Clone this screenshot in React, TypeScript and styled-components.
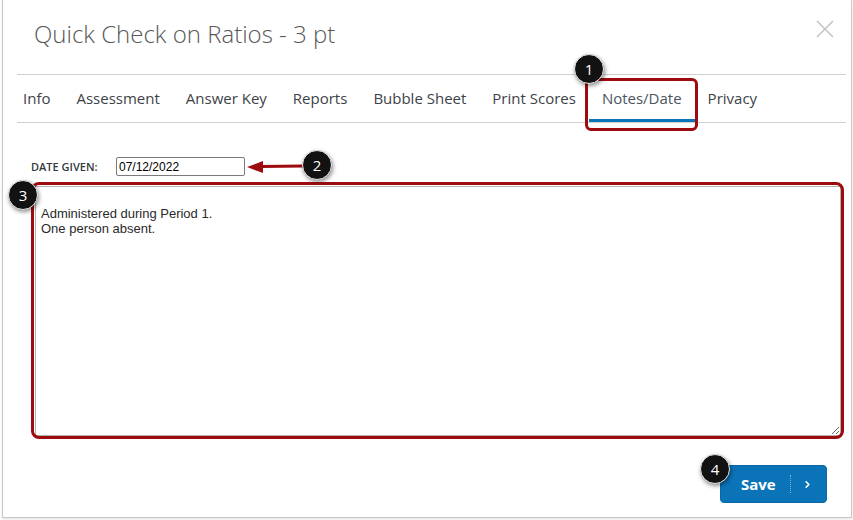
import styled, { createGlobalStyle } from "styled-components";
import { ChevronRight } from "lucide-react";

const GlobalStyle = createGlobalStyle`
  html, body {
    margin: 0;
    padding: 0;
    background: #ffffff;
  }
  * {
    box-sizing: border-box;
  }
`;

const tabs = [
  "Info",
  "Assessment",
  "Answer Key",
  "Reports",
  "Bubble Sheet",
  "Print Scores",
  "Notes/Date",
  "Privacy",
];

function App() {
  return (
    <Page>
      <GlobalStyle />
      <Dialog>
        <Header>
          <Title>Quick Check on Ratios - 3 pt</Title>
          <Close aria-label="close">
            <svg width="18" height="18" viewBox="0 0 18 18">
              <path d="M1 1 L17 17 M17 1 L1 17" stroke="#c4c4c4" strokeWidth="1.6" fill="none" />
            </svg>
          </Close>
        </Header>
        <TabBar>
          {tabs.map((t) => (
            <Tab key={t} $active={t === "Notes/Date"}>
              {t}
            </Tab>
          ))}
        </TabBar>
        <Body>
          <DateRow>
            <Label>Date Given:</Label>
            <DateInput defaultValue="07/12/2022" />
          </DateRow>
          <Notes
            defaultValue={"Administered during Period 1.\nOne person absent."}
          />
        </Body>
        <Footer>
          <SaveButton type="button">
            <SaveText>Save</SaveText>
            <Split />
            <Chevron>
              <ChevronRight size={11} strokeWidth={3.5} />
            </Chevron>
          </SaveButton>
        </Footer>
      </Dialog>

      <Outline $x={585} $y={78} $w={113} $h={53} $r={6} />
      <Outline $x={31} $y={182} $w={813} $h={257} $r={8} />
      <Arrow width="60" height="20" viewBox="0 0 60 20">
        <line x1="14" y1="8.5" x2="56" y2="8" stroke="#9e0b0f" strokeWidth="3" />
        <polygon points="0,9 16,3 16,15" fill="#9e0b0f" />
      </Arrow>
      <Badge $x={589} $y={69}>1</Badge>
      <Badge $x={317} $y={165}>2</Badge>
      <Badge $x={23} $y={195}>3</Badge>
      <Badge $x={715} $y={469}>4</Badge>
    </Page>
  );
}

const Page = styled.div`
  position: relative;
  width: 853px;
  height: 520px;
  padding-left: 2px;
  overflow: hidden;
`;

const Dialog = styled.div`
  width: 850px;
  height: 518px;
  border: 1px solid #c9c9c9;
  border-top: none;
  background: #fff;
  display: flex;
  flex-direction: column;
  font-family: "Open Sans", "Liberation Sans", sans-serif;
  box-shadow: 0 1px 2px rgba(0, 0, 0, 0.12);
`;

const Header = styled.div`
  display: flex;
  justify-content: space-between;
  align-items: flex-start;
  padding: 18px 17px 0 31px;
  height: 74px;
`;

const Title = styled.h1`
  margin: 0;
  font-size: 24px;
  line-height: 32px;
  font-weight: 300;
  color: #585858;
`;

const Close = styled.button`
  border: 0;
  background: transparent;
  padding: 0;
  margin-top: 2px;
  cursor: pointer;
`;

const TabBar = styled.div`
  display: flex;
  height: 49px;
  margin: 0 5px 0 14px;
  border-top: 1px solid #cfcfcf;
  border-bottom: 1px solid #cfcfcf;
  & > :first-child {
    margin-left: -7px;
  }
`;

const Tab = styled.div<{ $active?: boolean }>`
  display: flex;
  align-items: center;
  padding: 1px 13px 0;
  font-size: 15px;
  line-height: 20px;
  color: ${({ $active }) => ($active ? "#4a5560" : "#3d4247")};
  border-bottom: 3px solid ${({ $active }) => ($active ? "#0a74b8" : "transparent")};
  white-space: nowrap;
`;

const Body = styled.div`
  display: flex;
  flex-direction: column;
  padding: 34px 10px 0 28px;
`;

const DateRow = styled.div`
  display: flex;
  align-items: center;
  height: 19px;
`;

const Label = styled.label`
  width: 85px;
  font-size: 11px;
  font-weight: 600;
  text-transform: uppercase;
  color: #333a40;
`;

const DateInput = styled.input`
  width: 129px;
  height: 19px;
  border: 1px solid #7a7a7a;
  border-radius: 2px;
  padding: 0 2px;
  font-family: "Liberation Sans", Arial, sans-serif;
  font-size: 12px;
  color: #000;
  outline: none;
`;

const Notes = styled.textarea`
  margin: 10px 0 0 4px;
  width: 806px;
  height: 250px;
  border: 1px solid #b4b4b4;
  padding: 19px 5px;
  font-family: "Liberation Sans", Arial, sans-serif;
  font-size: 13px;
  line-height: 15px;
  color: #2a2a2a;
  outline: none;
  resize: both;
`;

const Footer = styled.div`
  display: flex;
  justify-content: flex-end;
  padding: 29px 24px 0 0;
`;

const SaveButton = styled.button`
  display: flex;
  align-items: center;
  height: 38px;
  width: 107px;
  padding: 0;
  border: 1px solid #0867a6;
  border-radius: 4px;
  background: #0b74b9;
  color: #fff;
  cursor: pointer;
`;

const SaveText = styled.span`
  font-family: "Open Sans", sans-serif;
  font-weight: 700;
  font-size: 15px;
  padding: 0 14px 0 20px;
`;

const Split = styled.span`
  height: 18px;
  border-left: 1px dotted rgba(255, 255, 255, 0.45);
`;

const Chevron = styled.span`
  flex: 1;
  display: flex;
  justify-content: center;
  padding-right: 2px;
`;

const Outline = styled.div<{ $x: number; $y: number; $w: number; $h: number; $r: number }>`
  position: absolute;
  left: ${({ $x }) => $x}px;
  top: ${({ $y }) => $y}px;
  width: ${({ $w }) => $w}px;
  height: ${({ $h }) => $h}px;
  border: 3px solid #9e0b0f;
  border-radius: ${({ $r }) => $r}px;
  pointer-events: none;
`;

const Arrow = styled.svg`
  position: absolute;
  left: 247px;
  top: 158px;
`;

const Badge = styled.div<{ $x: number; $y: number }>`
  position: absolute;
  left: ${({ $x }) => $x - 15}px;
  top: ${({ $y }) => $y - 15}px;
  width: 30px;
  height: 30px;
  border-radius: 50%;
  background: #121212;
  border: 1px solid #e8e8e8;
  box-shadow: 1px 2px 4px rgba(0, 0, 0, 0.45);
  color: #fff;
  font-family: "Open Sans", sans-serif;
  font-size: 15px;
  display: flex;
  align-items: center;
  justify-content: center;
  line-height: 1;
`;

export default App;
